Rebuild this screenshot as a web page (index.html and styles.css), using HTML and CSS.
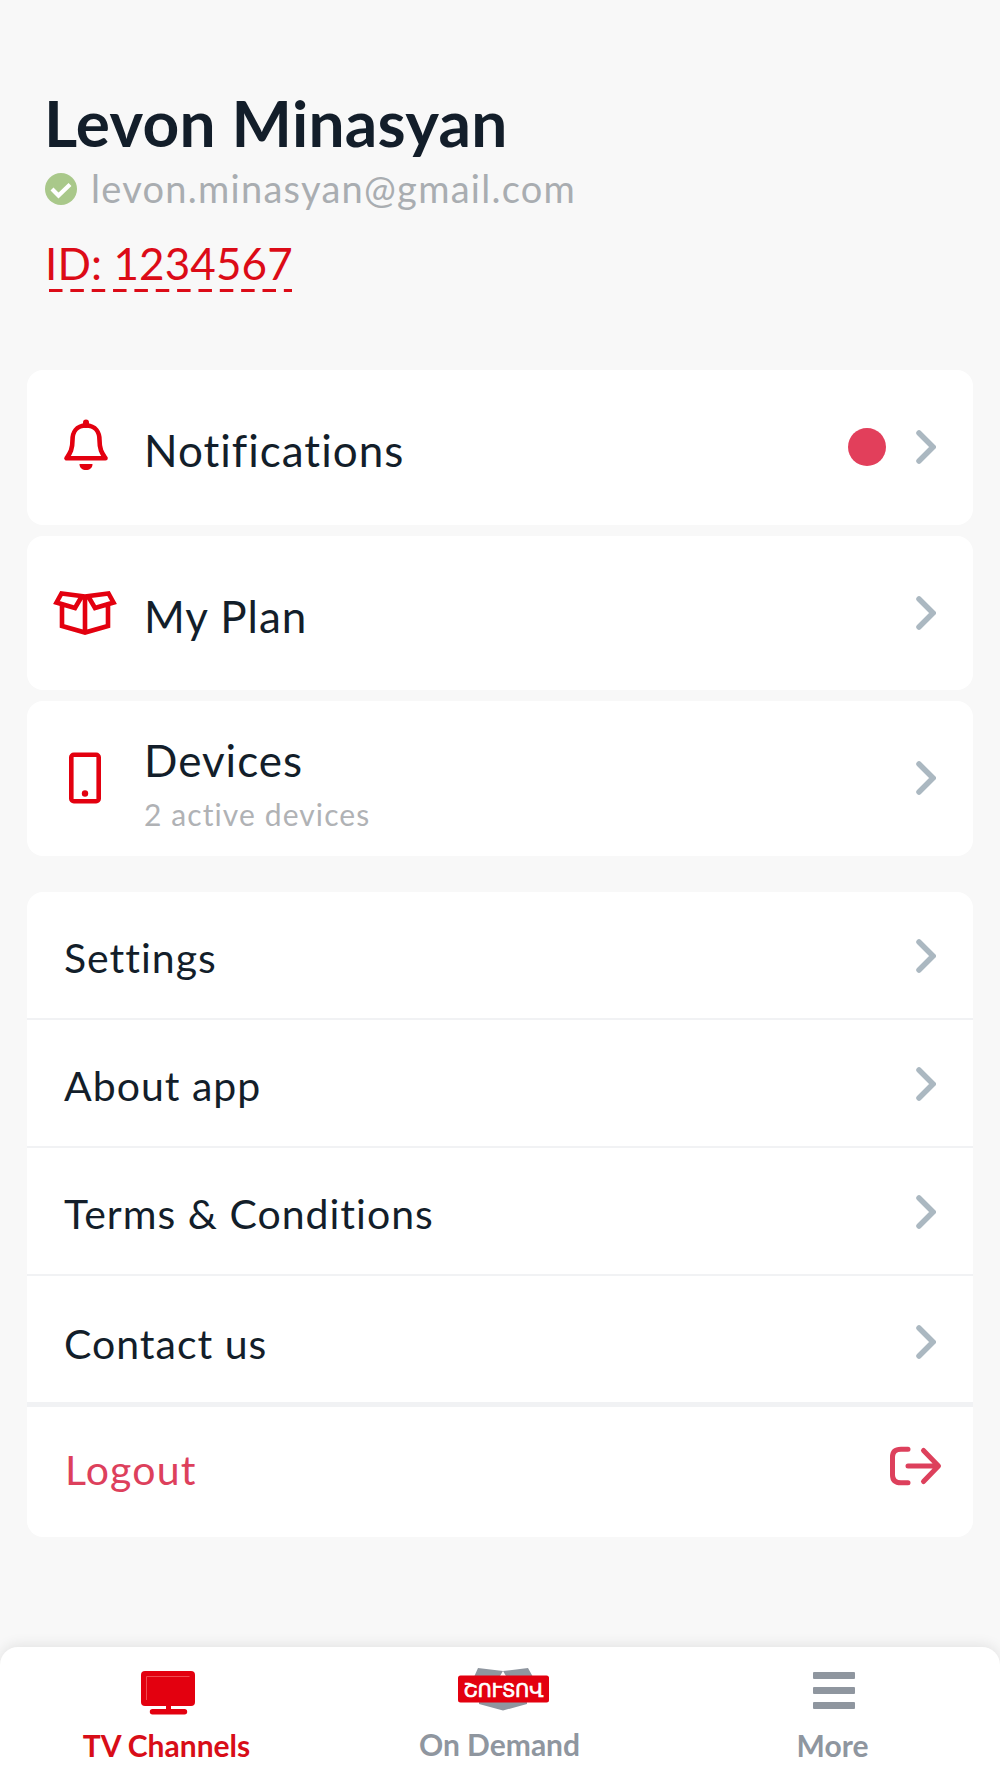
FILE: index.html
```html
<!DOCTYPE html>
<html lang="en">

<head>
  <meta charset="UTF-8">
  <meta name="viewport" content="width=device-width, initial-scale=1.0">
  <title>Profile</title>
  <link rel="stylesheet" href="styles.css">
</head>

<body>
  <div class="page">
    <div class="profile">
      <h1>Levon Minasyan</h1>
      <div class="email">
        <svg class="check" viewBox="0 0 32 32">
          <circle cx="16" cy="16" r="16" fill="#a9c88a" />
          <path d="M7 16 L13.5 22.5 L25 11.5" fill="none" stroke="#fff" stroke-width="4.2" />
        </svg>
        <span class="email-text">levon.minasyan@gmail.com</span>
      </div>
      <a class="user-id">
        <span class="id-text">ID: 1234567</span>
        <svg class="dashes" viewBox="0 0 243 3">
          <path d="M0 1.5 H243" stroke="#dc0b17" stroke-width="3" stroke-dasharray="13.5 7.85" />
        </svg>
      </a>
    </div>

    <div class="cards">
      <div class="card">
        <svg class="icon" viewBox="0 0 64 56">
          <path d="M33 6.500 C23 6.500 19.500 14 19.500 21 C19.500 31 17 34 13.500 39.300 H52.500 C49 34 46.500 31 46.500 21 C46.500 14 43 6.500 33 6.500 Z" />
          <path class="knob" d="M33 6 V3.500" />
          <path class="solid" d="M26.500 45 H39.500 C39.500 49 36.500 51 33 51 C29.500 51 26.500 49 26.500 45 Z" />
        </svg>
        <span class="card-title">Notifications</span>
        <span class="dot"></span>
        <svg class="chevron" viewBox="0 0 20 34"><path d="M3 3 L17 17 L3 31" /></svg>
      </div>
      <div class="card">
        <svg class="icon sharp" viewBox="0 0 64 56">
          <path d="M32 11 V47 M9 20 V41 L32 47.500 L55 41 V20 M32 11.500 L8.500 8.500 L3.500 17.500 L22 23 L29 11 M32 11.500 L55.500 8.500 L60.500 17.500 L42 23 L35 11" />
        </svg>
        <span class="card-title">My Plan</span>
        <svg class="chevron" viewBox="0 0 20 34"><path d="M3 3 L17 17 L3 31" /></svg>
      </div>
      <div class="card">
        <svg class="icon" viewBox="0 0 64 56">
          <rect x="18.300" y="4.800" width="27.400" height="46.400" rx="2.500" />
          <circle class="solid" cx="32" cy="43.500" r="3.200" />
        </svg>
        <div class="card-text">
          <span class="card-title">Devices</span>
          <span class="card-sub">2 active devices</span>
        </div>
        <svg class="chevron" viewBox="0 0 20 34"><path d="M3 3 L17 17 L3 31" /></svg>
      </div>
    </div>

    <div class="list">
      <div class="row">
        <span>Settings</span>
        <svg class="chevron" viewBox="0 0 20 34"><path d="M3 3 L17 17 L3 31" /></svg>
      </div>
      <div class="row">
        <span>About app</span>
        <svg class="chevron" viewBox="0 0 20 34"><path d="M3 3 L17 17 L3 31" /></svg>
      </div>
      <div class="row">
        <span>Terms &amp; Conditions</span>
        <svg class="chevron" viewBox="0 0 20 34"><path d="M3 3 L17 17 L3 31" /></svg>
      </div>
      <div class="row last">
        <span>Contact us</span>
        <svg class="chevron" viewBox="0 0 20 34"><path d="M3 3 L17 17 L3 31" /></svg>
      </div>
      <div class="row logout">
        <span>Logout</span>
        <svg class="logout-icon" viewBox="0 0 52 40">
          <path d="M18 3.200 H11 Q2.500 3.200 2.500 11 V29 Q2.500 36.800 11 36.800 H18" />
          <path d="M18 20 H47 M33.500 4.500 L48.500 20 L33.500 35.500" />
        </svg>
      </div>
    </div>

    <div class="navbar">
      <div class="nav-item active">
        <svg class="tv" viewBox="0 0 54 44">
          <rect x="0" y="0" width="54" height="35" rx="4" fill="#e3000f" />
          <path d="M5.500 29 V5.500 H48.500" fill="none" stroke="#ee4a50" stroke-width="1" />
          <path d="M25 34 H30 V38 H43.500 A2.700 2.700 0 0 1 43.500 43.400 H11.500 A2.700 2.700 0 0 1 11.500 38 H25 Z" fill="#e3000f" />
        </svg>
        <span>TV Channels</span>
      </div>
      <div class="nav-item">
        <div class="logo">
          <svg class="logo-box" viewBox="0 0 92 44">
            <path d="M20 1 L45 4 L70 1 L75 10 L69 20 V37 L45 43.500 L21 37 V20 L16 10 Z" fill="#8f969f" />
            <path d="M45 4 L42 9 H48 Z" fill="#fff" />
            <rect x="0" y="8.500" width="91" height="27" rx="2.500" fill="#e3000f" />
          </svg>
          <span class="logo-text">ՇՈՒՏՈՎ</span>
        </div>
        <span>On Demand</span>
      </div>
      <div class="nav-item">
        <div class="menu">
          <i></i>
          <i></i>
          <i></i>
        </div>
        <span>More</span>
      </div>
    </div>
  </div>
</body>

</html>
```

FILE: styles.css
```css
* {
  box-sizing: border-box;
}

body {
  margin: 0;
  font-family: Lato, sans-serif;
  background-color: #f8f8f8;
  color: #131e2a;
}

.page {
  height: 1778px;
  display: flex;
  flex-direction: column;
  overflow: hidden;
}

.profile {
  height: 370px;
  padding: 84px 45px 0;
}

h1 {
  margin: 0 0 0 -1px;
  font-size: 64px;
  line-height: 78px;
  font-weight: bold;
  letter-spacing: 0.25px;
}

.email {
  display: flex;
  align-items: center;
  height: 54px;
  color: #a9adb1;
  font-size: 38px;
  letter-spacing: 1.27px;
}

.email-text {
  padding-bottom: 2px;
}

.check {
  width: 32px;
  height: 32px;
  margin-right: 14px;
}

.user-id {
  display: inline-block;
  margin-top: 21px;
  color: #dc0b17;
  font-size: 44px;
  line-height: 52px;
  letter-spacing: 0.1px;
}

.id-text {
  display: block;
}

.dashes {
  display: block;
  width: 243px;
  height: 3px;
  margin: 0 0 0 4px;
}

.cards {
  padding: 0 27px;
  display: flex;
  flex-direction: column;
  gap: 11px;
}

.card {
  height: 154.5px;
  padding: 0 37px 0 26px;
  background-color: white;
  border-radius: 16px;
  display: flex;
  align-items: center;
}

.icon {
  width: 64px;
  height: 56px;
  margin-right: 27px;
  fill: none;
  stroke: #e3000f;
  stroke-width: 4.6;
  stroke-linecap: round;
  stroke-linejoin: round;
}

.icon.sharp {
  stroke-linecap: butt;
  stroke-linejoin: miter;
}

.knob {
  stroke-width: 6;
}

.solid {
  fill: #e3000f;
  stroke: none;
}

.card-text {
  display: flex;
  flex-direction: column;
  padding-top: 12px;
}

.card-title {
  padding-top: 5.5px;
  font-size: 44px;
  line-height: 54px;
  letter-spacing: 1px;
}

.card-sub {
  font-size: 30px;
  line-height: 54px;
  letter-spacing: 1.1px;
  color: #b0b2b5;
}

.dot {
  width: 38px;
  height: 38px;
  margin-left: auto;
  margin-right: 30px;
  border-radius: 50%;
  background-color: #e23f5b;
}

.chevron {
  width: 20px;
  height: 34px;
  margin-left: auto;
  fill: none;
  stroke: #abb8c1;
  stroke-width: 5.5;
  stroke-linecap: round;
}

.dot + .chevron {
  margin-left: 0;
}

.list {
  margin: 36.5px 27px 0;
  background-color: white;
  border-radius: 16px;
}

.row {
  height: 128px;
  padding: 2px 37px 0 37px;
  display: flex;
  align-items: center;
  font-size: 41px;
  letter-spacing: 1px;
  border-bottom: 2px solid #f1f2f4;
}

.row span {
  padding-top: 2px;
}

.row.last {
  height: 131px;
  padding-top: 6px;
  border-bottom: 5px solid #f1f2f4;
}

.row.logout {
  height: 130px;
  padding: 0 31px 12px 38px;
  border-bottom: none;
  color: #dd405c;
}

.row.logout span {
  padding-top: 7px;
  letter-spacing: 1.2px;
}

.logout-icon {
  width: 52px;
  height: 40px;
  margin-left: auto;
  fill: none;
  stroke: #dd405c;
  stroke-width: 5;
  stroke-linecap: round;
  stroke-linejoin: round;
}

.navbar {
  height: 131px;
  margin-top: auto;
  background-color: white;
  border-radius: 18px 18px 0 0;
  box-shadow: 0 -2px 14px rgba(0, 0, 0, 0.09);
  display: grid;
  grid-template-columns: repeat(3, 333px);
}

.nav-item {
  display: flex;
  flex-direction: column;
  align-items: center;
  padding-top: 20px;
  font-size: 30px;
  line-height: 36px;
  font-weight: bold;
  color: #8f969f;
}

.active {
  color: #d80d18;
}

.tv {
  width: 54px;
  height: 44px;
  margin: 4px 0 12px 3px;
}

.logo {
  position: relative;
  width: 92px;
  height: 44px;
  margin: 0 0 15px 8px;
}

.logo-box {
  display: block;
  width: 92px;
  height: 44px;
}

.logo-text {
  position: absolute;
  left: 0;
  top: 10px;
  width: 92px;
  text-align: center;
  font-family: "DejaVu Sans", sans-serif;
  font-size: 19px;
  font-weight: normal;
  line-height: 26px;
  -webkit-text-stroke: 0.7px white;
  color: white;
}

.menu {
  display: flex;
  flex-direction: column;
  gap: 8px;
  padding: 5px 0 18px 3px;
}

.menu i {
  width: 42px;
  height: 7px;
  border-radius: 1px;
  background-color: #8f969f;
}
```
